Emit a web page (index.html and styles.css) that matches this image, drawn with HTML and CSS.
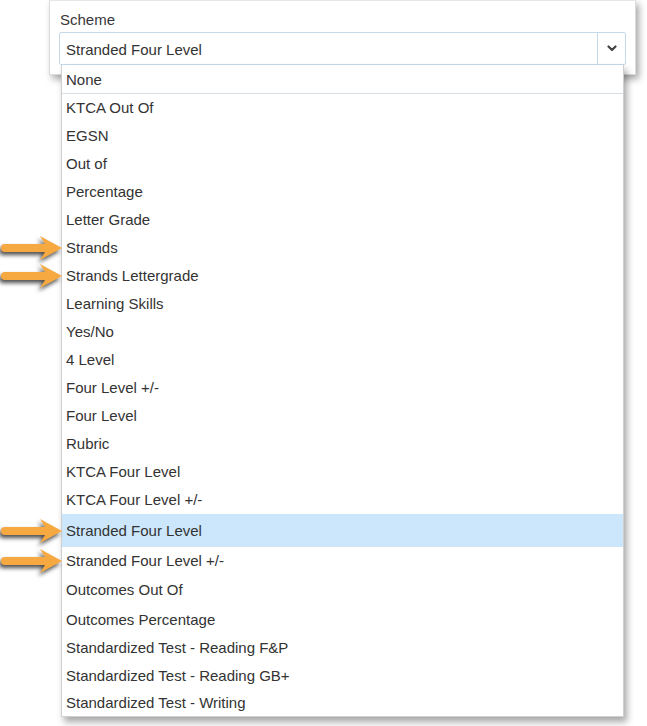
FILE: index.html
```html
<!DOCTYPE html>
<html>
<head>
<meta charset="utf-8">
<link rel="stylesheet" href="styles.css">
</head>
<body>
<div class="stage">
  <div class="panel">
    <div class="label">Scheme</div>
    <div class="select">
      <div class="select-value">Stranded Four Level</div>
      <div class="select-btn">
        <svg width="10" height="7" viewBox="0 0 10 7"><path d="M1.5 1.5 L5 5 L8.5 1.5" fill="none" stroke="#444" stroke-width="2.2" stroke-linecap="round" stroke-linejoin="round"/></svg>
      </div>
    </div>
  </div>
  <ul class="menu">
    <li class="item first">None</li>
    <li class="item">KTCA Out Of</li>
    <li class="item">EGSN</li>
    <li class="item">Out of</li>
    <li class="item">Percentage</li>
    <li class="item">Letter Grade</li>
    <li class="item marked">Strands<svg class="arrow" width="66" height="30" viewBox="0 0 66 30"><path d="M6 11 L46 11 L41 3 L63 15 L41 27 L46 19 L6 19 A4 4 0 0 1 6 11 Z" fill="#f6a940"/></svg></li>
    <li class="item marked">Strands Lettergrade<svg class="arrow" width="66" height="30" viewBox="0 0 66 30"><path d="M6 11 L46 11 L41 3 L63 15 L41 27 L46 19 L6 19 A4 4 0 0 1 6 11 Z" fill="#f6a940"/></svg></li>
    <li class="item">Learning Skills</li>
    <li class="item">Yes/No</li>
    <li class="item">4 Level</li>
    <li class="item">Four Level +/-</li>
    <li class="item">Four Level</li>
    <li class="item">Rubric</li>
    <li class="item">KTCA Four Level</li>
    <li class="item">KTCA Four Level +/-</li>
    <li class="item marked selected">Stranded Four Level<svg class="arrow" width="66" height="30" viewBox="0 0 66 30"><path d="M6 11 L46 11 L41 3 L63 15 L41 27 L46 19 L6 19 A4 4 0 0 1 6 11 Z" fill="#f6a940"/></svg></li>
    <li class="item marked">Stranded Four Level +/-<svg class="arrow" width="66" height="30" viewBox="0 0 66 30"><path d="M6 11 L46 11 L41 3 L63 15 L41 27 L46 19 L6 19 A4 4 0 0 1 6 11 Z" fill="#f6a940"/></svg></li>
    <li class="item h29">Outcomes Out Of</li>
    <li class="item h30">Outcomes Percentage</li>
    <li class="item">Standardized Test - Reading F&amp;P</li>
    <li class="item h27">Standardized Test - Reading GB+</li>
    <li class="item h27">Standardized Test - Writing</li>
  </ul>
</div>
</body>
</html>
```
FILE: styles.css
```css
html, body {
  margin: 0;
  padding: 0;
  background: #ffffff;
}
body {
  font-family: "Liberation Sans", Arial, sans-serif;
  font-size: 15px;
  color: #333;
}
.stage {
  position: relative;
  width: 647px;
  height: 726px;
}
.panel {
  margin-left: 49px;
  border: 1px solid #dcdcdc;
  border-top-color: #e6e6e6;
  box-shadow: 3px 4px 7px rgba(0, 0, 0, 0.35);
  background: #fff;
  padding: 0 9px 0 9px;
  box-sizing: border-box;
  width: 587px;
  height: 75px;
}
.label {
  height: 31px;
  line-height: 38px;
  padding-left: 1px;
  color: #383838;
}
.select {
  display: flex;
  height: 33px;
  border: 1px solid #c6d9e8;
  border-radius: 2px;
  box-sizing: border-box;
}
.select-value {
  flex: 1;
  line-height: 33px;
  padding-left: 6px;
  color: #333;
}
.select-btn {
  width: 27px;
  border-left: 1px solid #c6d9e8;
  display: flex;
  align-items: center;
  justify-content: center;
}
.menu {
  position: absolute;
  left: 61px;
  top: 65px;
  width: 563px;
  margin: 0;
  padding: 0;
  list-style: none;
  background: #fff;
  border: 1px solid #cfcfcf;
  border-top: none;
  box-sizing: border-box;
  box-shadow: 3px 5px 7px rgba(0, 0, 0, 0.35);
}
.item {
  position: relative;
  box-sizing: border-box;
  height: 28px;
  line-height: 28px;
  padding-left: 4px;
  color: #333;
}
.item.first {
  height: 29px;
  line-height: 29px;
  border-bottom: 1px solid #d8dfe5;
}
.item.selected {
  background: #cce7fb;
  height: 33px;
  line-height: 33px;
}
.item.h29 {
  height: 29px;
  line-height: 29px;
}
.item.h30 {
  height: 30px;
  line-height: 32px;
}
.item.h27 {
  height: 27px;
  line-height: 27px;
}
.arrow {
  position: absolute;
  left: -63px;
  top: 50%;
  margin-top: -15px;
  filter: drop-shadow(-2px 3px 2px rgba(0, 0, 0, 0.7));
  overflow: visible;
}
```
